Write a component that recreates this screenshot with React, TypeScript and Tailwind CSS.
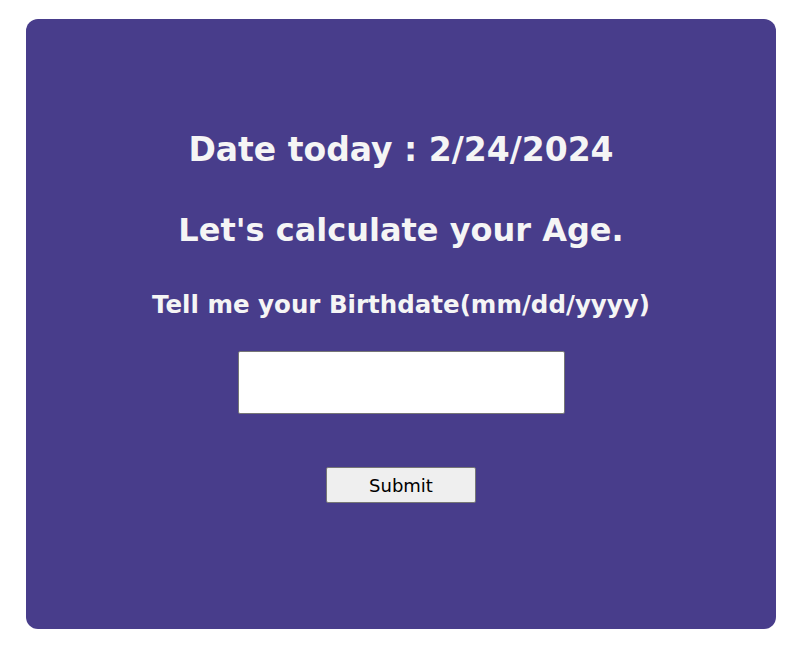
export default function App() {
  return (
    <div className="min-h-screen bg-white pt-[19px] pl-[26px] pb-[28px] font-['Comic_Sans_MS','DejaVu_Sans',sans-serif]">
      <div className="w-[750px] h-[610px] rounded-[12px] bg-[#483d8b] text-[#f5f5f5] flex flex-col items-center pt-[111px]">
        <h1 className="text-[33px] leading-[40px] font-bold">Date today : 2/24/2024</h1>
        <h2 className="mt-[40px] text-[32px] leading-[40px] font-bold">Let's calculate your Age.</h2>
        <h3 className="mt-[40px] text-[24.5px] leading-[30px] font-bold">Tell me your Birthdate(mm/dd/yyyy)</h3>
        <input
          type="text"
          className="mt-[31px] w-[327px] h-[63px] bg-white rounded-[2px] border border-[#767676] text-black px-2 outline-none"
        />
        <button className="mt-[53px] w-[150px] h-[36px] bg-[#efefef] border border-[#767676] rounded-[2px] text-black text-[18px]">
          Submit
        </button>
      </div>
    </div>
  );
}
